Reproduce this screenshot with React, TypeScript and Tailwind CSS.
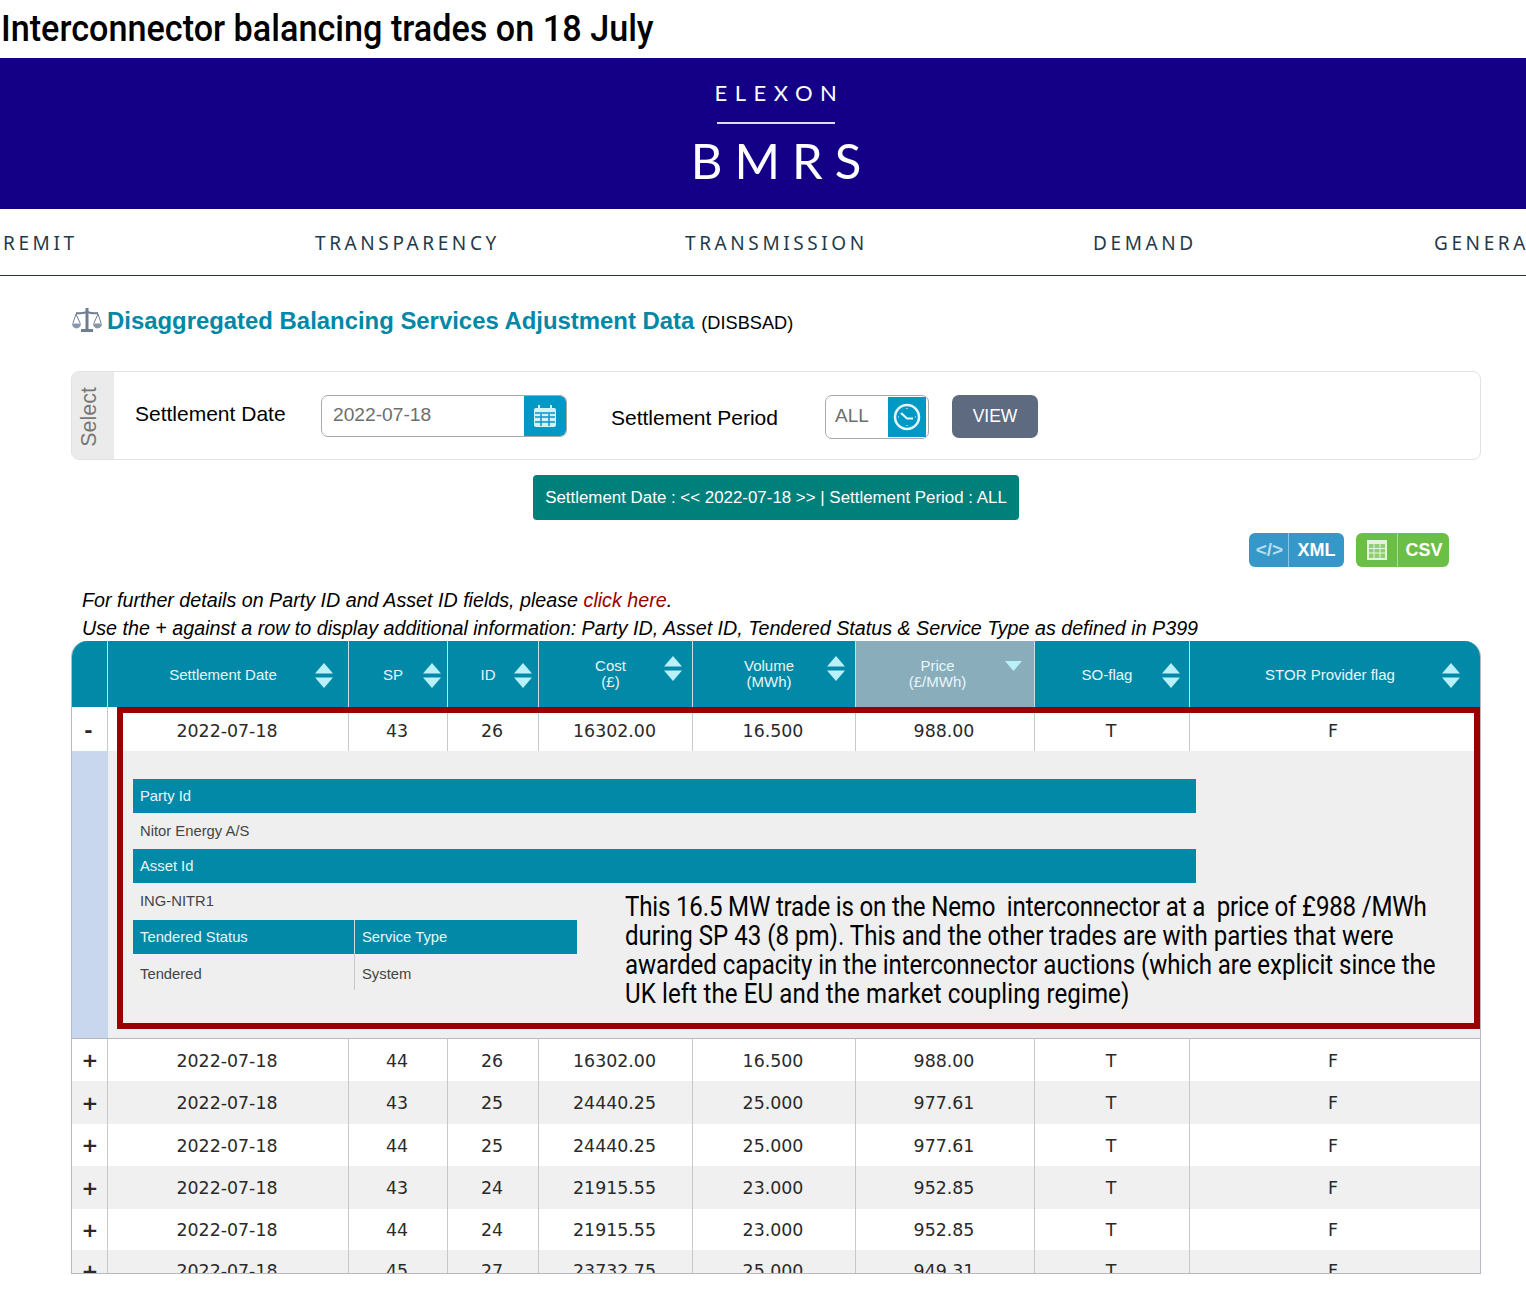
import React from 'react'

const cols = 'grid grid-cols-[36px_241px_99px_91px_154px_163px_179px_155px_1fr]'
const sans = 'font-["Liberation_Sans",Arial,sans-serif]'

const headers = [
  { label: ['Settlement Date'], right: 'right-[15px]' },
  { label: ['SP'], right: 'right-[6px]' },
  { label: ['ID'], right: 'right-[6px]' },
  { label: ['Cost', '(£)'], right: 'right-[10px]' },
  { label: ['Volume', '(MWh)'], right: 'right-[10px]' },
  { label: ['Price', '(£/MWh)'], right: 'right-[12px]', sorted: true },
  { label: ['SO-flag'], right: 'right-[9px]' },
  { label: ['STOR Provider flag'], right: 'right-[20px]' },
]

const rows = [
  ['44', '26', '16302.00', '16.500', '988.00', 'h-[42px]'],
  ['43', '25', '24440.25', '25.000', '977.61', 'h-[43px]'],
  ['44', '25', '24440.25', '25.000', '977.61', 'h-[42px]'],
  ['43', '24', '21915.55', '23.000', '952.85', 'h-[43px]'],
  ['44', '24', '21915.55', '23.000', '952.85', 'h-[41px]'],
  ['45', '27', '23732.75', '25.000', '949.31', 'h-[41px]'],
]

function Arrows({ right, two }: { right: string; two: boolean }) {
  return (
    <svg
      className={`absolute ${right} ${two ? 'top-[15px]' : 'top-[22px]'}`}
      width="18"
      height="25"
      viewBox="0 0 18 25"
    >
      <path d="M9 0l9 10.500H0z" fill="#b9f1fb" />
      <path d="M0 14.500h18L9 25z" fill="#b9f1fb" />
    </svg>
  )
}

function Row({ values, even }: { values: string[]; even: boolean }) {
  const cell = 'flex items-center justify-center border-r border-[#c8c8c8] pt-[2px] pr-[2px]'
  return (
    <div className={`${cols} ${values[5]} ${even ? 'bg-[#f0f0f0]' : 'bg-white'} font-["DejaVu_Sans",sans-serif] text-[17.400px] text-[#2a2a2a]`}>
      <div className="flex items-center justify-center border-r border-[#c8c8c8] pl-[1px] text-[20px] font-bold">+</div>
      <div className={cell}>2022-07-18</div>
      <div className={cell}>{values[0]}</div>
      <div className={cell}>{values[1]}</div>
      <div className={cell}>{values[2]}</div>
      <div className={cell}>{values[3]}</div>
      <div className={cell}>{values[4]}</div>
      <div className={cell}>T</div>
      <div className="flex items-center justify-center pt-[2px] pr-[4px]">F</div>
    </div>
  )
}

export default function App() {
  return (
    <div className={`w-[1526px] h-[1298px] overflow-hidden bg-white ${sans}`}>
      <div className="h-[58px] pl-[1px] pt-[4px]">
        <h1 className='origin-left scale-x-[0.924] whitespace-nowrap font-["Roboto",sans-serif] text-[37px] leading-[50px] font-medium text-black'>
          Interconnector balancing trades on 18 July
        </h1>
      </div>

      <div className='flex h-[151px] flex-col items-center bg-[#140087] pt-[21px] pl-[26px] font-["Lato",sans-serif] text-white'>
        <div className="h-[28px] pl-[7px] text-[22px] leading-[28px] tracking-[7.500px]">ELEXON</div>
        <div className="mt-[15px] h-[2px] w-[118px] bg-[#dcdcf2]" />
        <div className="mt-[8px] pl-[12px] text-[49px] leading-[56px] tracking-[12px]">BMRS</div>
      </div>

      <nav className='flex h-[67px] items-center border-b border-[#1f3a4a] pt-[2px] pl-[3px] font-["Noto_Sans",sans-serif] text-[19px] tracking-[3.600px] whitespace-nowrap text-[#1f3a4a]'>
        <div className="w-[312px] shrink-0">REMIT</div>
        <div className="w-[370px] shrink-0">TRANSPARENCY</div>
        <div className="w-[408px] shrink-0">TRANSMISSION</div>
        <div className="w-[341px] shrink-0">DEMAND</div>
        <div className="shrink-0">GENERATION</div>
      </nav>

      <div className="flex h-[95px] items-start pl-[71px] pt-[30px]">
        <svg width="32" height="24" viewBox="0 0 32 24" className="mr-[4px] mt-[2px]" fill="none" stroke="#6d7d92">
          <path d="M16 0v21M10 22.500h12" strokeWidth="3" />
          <path d="M5 5q5 1 11-1q6 2 11 1" strokeWidth="2" />
          <path d="M5 6L2 15M5 6l4 9M27 6l-4 9M27 6l3 9" strokeWidth="1" />
          <path d="M1 15.500a4.500 5 0 0 0 9 0zM22 15.500a4.500 5 0 0 0 9 0z" fill="#8796a8" stroke="none" />
        </svg>
        <span className="text-[23.900px] leading-[30px] font-bold text-[#0088a6]">
          Disaggregated Balancing Services Adjustment Data
        </span>
        <span className="ml-[7px] mt-[2px] text-[18.200px] leading-[30px] text-black">(DISBSAD)</span>
      </div>

      <div className="ml-[71px] flex h-[89px] w-[1410px] overflow-hidden rounded-[8px] border border-[#e2e2e2]">
        <div className="flex w-[42px] items-center justify-center bg-[#ebebeb] pt-[2px] pr-[8px]">
          <span className="rotate-180 text-[21.500px] text-[#777] [writing-mode:vertical-rl]">Select</span>
        </div>
        <div className="flex items-start pt-[23px]">
          <span className="ml-[21px] w-[186px] text-[21px] leading-[38px] text-black">Settlement Date</span>
          <div className="flex h-[42px] w-[246px] overflow-hidden rounded-[7px] border border-[#a8a8a8]">
            <span className="flex-1 pl-[11px] text-[19.200px] leading-[38px] text-[#6e6e6e]">2022-07-18</span>
            <span className="flex w-[42px] items-center justify-center bg-[#0099c6]">
              <svg width="26" height="26" viewBox="0 0 26 26" fill="none" stroke="#d3f1fb">
                <rect x="2" y="5" width="22" height="19" rx="2" fill="#d3f1fb" stroke="none" />
                <path d="M7 2v6M19 2v6" strokeWidth="2" />
                <path d="M3 14h20M3 19h20M9 11v12M17 11v12M3 10h20" stroke="#0099c6" strokeWidth="1.500" />
              </svg>
            </span>
          </div>
          <span className="ml-[44px] mt-[4px] w-[214px] text-[21px] leading-[38px] text-black">Settlement Period</span>
          <div className="flex h-[44px] w-[104px] items-stretch overflow-hidden rounded-[7px] border border-[#a8a8a8] pr-[2px]">
            <span className="flex-1 pl-[9px] text-[19px] leading-[40px] text-[#6e6e6e]">ALL</span>
            <span className="my-[1px] flex w-[38px] items-center justify-center bg-[#0099c6]">
              <svg width="30" height="30" viewBox="0 0 30 30" fill="none" stroke="#e6f7fc">
                <circle cx="15" cy="15" r="12" strokeWidth="2.500" />
                <path d="M9 11l6 5.500h6" strokeWidth="2.200" />
                <path d="M15 6v1M15 23v1M6 15h1M23 15h1" strokeWidth="1.200" />
              </svg>
            </span>
          </div>
          <button className="ml-[23px] h-[43px] w-[86px] rounded-[7px] bg-[#5e6a80] text-[17.500px] text-white">VIEW</button>
        </div>
      </div>

      <div className="mt-[15px] flex justify-center pl-[26px]">
        <div className="flex h-[45px] w-[486px] items-center justify-center rounded-[4px] bg-[#00807a] text-[16.900px] whitespace-nowrap text-white">
          Settlement Date : &lt;&lt; 2022-07-18 &gt;&gt; | Settlement Period : ALL
        </div>
      </div>

      <div className="mt-[13px] flex h-[34px] justify-end gap-[12px] pr-[77px] text-[18px] font-bold text-white">
        <div className="flex w-[95px] overflow-hidden rounded-[6px] bg-[#3598c8]">
          <span className="flex w-[40px] items-center justify-center border-r border-[#8cc6e2] pl-[2px] text-[19px] font-bold text-[#b9dcee]">&lt;/&gt;</span>
          <span className="flex flex-1 items-center justify-center">XML</span>
        </div>
        <div className="flex w-[93px] overflow-hidden rounded-[6px] bg-[#6cbf46]">
          <span className="flex w-[42px] items-center justify-center border-r border-[#a8dc90]">
            <svg width="22" height="22" viewBox="0 0 22 22">
              <rect x="1" y="1" width="20" height="20" fill="#e4f4da" />
              <rect x="3" y="5" width="16" height="14" fill="#8fce72" />
              <path d="M3 9.500h16M3 14h16M8 5v14M14 5v14" stroke="#e4f4da" strokeWidth="1" />
            </svg>
          </span>
          <span className="flex flex-1 items-center justify-center pl-[1px]">CSV</span>
        </div>
      </div>

      <div className="mt-[20px] h-[54px] pl-[82px] text-[19.700px] leading-[27px] whitespace-nowrap text-black italic">
        <div>
          For further details on Party ID and Asset ID fields, please <span className="text-[#990000]">click here</span>.
        </div>
        <div className="pt-[1px]">Use the + against a row to display additional information: Party ID, Asset ID, Tendered Status &amp; Service Type as defined in P399</div>
      </div>

      <div className="relative ml-[71px] h-[633px] w-[1410px]">
        <div className="h-full overflow-hidden rounded-t-[16px] border-x border-b border-[#b8b8c0]">
          <div className={`${cols} h-[66px] bg-[#0289a8] text-[15px] leading-[16px] text-[#e6f7fb]`}>
            <div className="border-r border-[#c8dde4]" />
            {headers.map((h, i) => (
              <div
                key={i}
                className={`relative flex flex-col items-center justify-center pr-[10px] ${i < 7 ? 'border-r border-[#c8dde4]' : ''} ${h.sorted ? 'bg-[#8aadbb] pr-[15px]' : ''} ${h.label.length > 1 ? '' : 'pt-[1px]'}`}
              >
                {h.label.map((l) => (
                  <span key={l} className="whitespace-nowrap">{l}</span>
                ))}
                {h.sorted ? (
                  <svg className="absolute top-[20px] right-[12px]" width="17" height="10" viewBox="0 0 17 10">
                    <path d="M0 0h17l-8.500 10z" fill="#b9f1fb" />
                  </svg>
                ) : (
                  <Arrows right={h.right} two={h.label.length > 1} />
                )}
              </div>
            ))}
          </div>

          <div className={`${cols} h-[44px] bg-white font-["DejaVu_Sans",sans-serif] text-[17.400px] text-[#2a2a2a]`}>
            <div className="flex items-center justify-center border-r border-[#c8c8c8] pr-[2px] pt-[2px] text-[20px] font-bold">-</div>
            {['2022-07-18', '43', '26', '16302.00', '16.500', '988.00', 'T'].map((v, i) => (
              <div key={i} className="flex items-center justify-center border-r border-[#c8c8c8] pt-[4px] pr-[2px]">{v}</div>
            ))}
            <div className="flex items-center justify-center pt-[4px] pr-[4px]">F</div>
          </div>

          <div className="flex h-[288px] border-b border-[#b8b8c0] bg-[#efefef] text-[14.800px] text-[#444]">
            <div className="w-[36px] bg-[#c8d7ee]" />
            <div className="w-[1088px] pt-[28px] pl-[25px]">
              <div className="flex h-[34px] items-center bg-[#0289a8] pl-[7px] text-[#e6f7fb]">Party Id</div>
              <div className="flex h-[36px] items-center pl-[7px]">Nitor Energy A/S</div>
              <div className="flex h-[34px] items-center bg-[#0289a8] pl-[7px] text-[#e6f7fb]">Asset Id</div>
              <div className="flex h-[37px] items-center pl-[7px]">ING-NITR1</div>
              <div className="flex h-[34px] w-[444px] text-[#e6f7fb]">
                <div className="flex w-[222px] items-center border-r border-[#c8dde4] bg-[#0289a8] pl-[7px]">Tendered Status</div>
                <div className="flex flex-1 items-center bg-[#0289a8] pl-[7px]">Service Type</div>
              </div>
              <div className="flex h-[36px] w-[444px]">
                <div className="flex w-[222px] items-center border-r border-[#c8c8c8] pl-[7px] pt-[4px]">Tendered</div>
                <div className="flex flex-1 items-center pl-[7px] pt-[4px]">System</div>
              </div>
            </div>
          </div>

          {rows.map((r, i) => (
            <Row key={i} values={r} even={i % 2 === 1} />
          ))}
        </div>

        <div className="absolute top-[66px] left-[46px] h-[322px] w-[1363px] border-[6px] border-[#990000]" />
        <div className='absolute top-[252px] left-[554px] origin-left scale-x-[0.892] font-["Roboto",sans-serif] text-[27px] leading-[29px] whitespace-pre text-black'>
          <div className="tracking-[-0.200px]">This 16.5 MW trade is on the Nemo  interconnector at a  price of £988 /MWh</div>
          <div>during SP 43 (8 pm). This and the other trades are with parties that were</div>
          <div className="tracking-[-0.070px]">awarded capacity in the interconnector auctions (which are explicit since the</div>
          <div className="tracking-[0.120px]">UK left the EU and the market coupling regime)</div>
        </div>
      </div>
    </div>
  )
}
